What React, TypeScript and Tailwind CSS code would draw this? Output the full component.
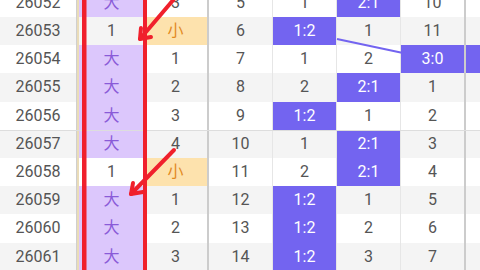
import React from "react";

type Row = {
  n: string;
  a: string;
  b: string;
  c: string;
  d: string;
  e: string;
  f: string;
  g: boolean;
};

const rows: Row[] = [
  { n: "26052", a: "大", b: "3", c: "5", d: "1", e: "2:1", f: "10", g: false },
  { n: "26053", a: "1", b: "小", c: "6", d: "1:2", e: "1", f: "11", g: false },
  { n: "26054", a: "大", b: "1", c: "7", d: "1", e: "2", f: "3:0", g: true },
  { n: "26055", a: "大", b: "2", c: "8", d: "2", e: "2:1", f: "1", g: false },
  { n: "26056", a: "大", b: "3", c: "9", d: "1:2", e: "1", f: "2", g: false },
  { n: "26057", a: "大", b: "4", c: "10", d: "1", e: "2:1", f: "3", g: false },
  { n: "26058", a: "1", b: "小", c: "11", d: "2", e: "2:1", f: "4", g: false },
  { n: "26059", a: "大", b: "1", c: "12", d: "1:2", e: "1", f: "5", g: false },
  { n: "26060", a: "大", b: "2", c: "13", d: "1:2", e: "2", f: "6", g: false },
  { n: "26061", a: "大", b: "3", c: "14", d: "1:2", e: "3", f: "7", g: false },
];

function Score({ v, w, line }: { v: string; w: string; line: boolean }) {
  const hit = v.includes(":");
  return (
    <div
      className={
        (hit ? "bg-[#7364f0] text-white " : "text-[#555] ") +
        (line ? "border-r border-[#e6e6e6] " : "") +
        w +
        " h-full flex items-center justify-center"
      }
    >
      {v}
    </div>
  );
}

export default function App() {
  return (
    <div
      className="relative w-[480px] h-[270px] overflow-hidden bg-white text-[16px]"
      style={{ fontFamily: 'Roboto, "Noto Sans CJK SC", sans-serif' }}
    >
      <div className="-mt-[11.2px] flex flex-col">
        {rows.map((r, i) => (
          <div
            key={r.n}
            className={
              (i % 2 === 1 ? "bg-[#f4f4f4] " : "bg-white ") +
              (r.n === "26057" ? "border-t border-[#dddddd] " : "") +
              "h-[28.2px] flex items-stretch box-border"
            }
          >
            <div className="w-[77px] flex items-center justify-center text-[#555] border-r border-[#cfcfcf]">
              {r.n}
            </div>
            <div className="w-[2px] bg-[#eadcb8]" />
            <div
              className={
                (r.a === "大" ? "bg-[#dcc7fc] text-[#8a5bd8] " : "text-[#555] ") +
                "w-[65px] flex items-center justify-center"
              }
            >
              {r.a}
            </div>
            <div
              className={
                (r.b === "小" ? "bg-[#fde2ad] text-[#e38a1f] " : "text-[#555] ") +
                "w-[63px] flex items-center justify-center"
              }
            >
              {r.b}
            </div>
            <div className="w-[2px] bg-[#cccccc]" />
            <div className="w-[64px] flex items-center justify-center text-[#555] border-r border-[#e6e6e6]">
              {r.c}
            </div>
            <Score v={r.d} w="w-[64px]" line={true} />
            <Score v={r.e} w="w-[64px]" line={true} />
            <Score v={r.f} w="w-[63px]" line={false} />
            <div className="w-[2px] bg-[#cccccc]" />
            <div className={(r.g ? "bg-[#7364f0] " : "") + "flex-1"} />
          </div>
        ))}
      </div>

      <svg
        className="absolute inset-0 pointer-events-none"
        width="480"
        height="270"
        viewBox="0 0 480 270"
      >
        <line x1="337" y1="39" x2="403" y2="53" stroke="#7364f0" strokeWidth="2" />
        <rect x="82" y="-10" width="4.5" height="290" fill="#f0202c" />
        <rect x="143" y="-10" width="4" height="290" fill="#f0202c" />
        <g stroke="#f0202c" strokeWidth="4" strokeLinecap="round" strokeLinejoin="round" fill="none">
          <line x1="180" y1="-8" x2="140" y2="39" />
          <polyline points="141,28 140,39 151,37" />
          <line x1="174" y1="150" x2="131" y2="194" />
          <polyline points="133,183 131,194 143,192" />
        </g>
      </svg>
    </div>
  );
}
